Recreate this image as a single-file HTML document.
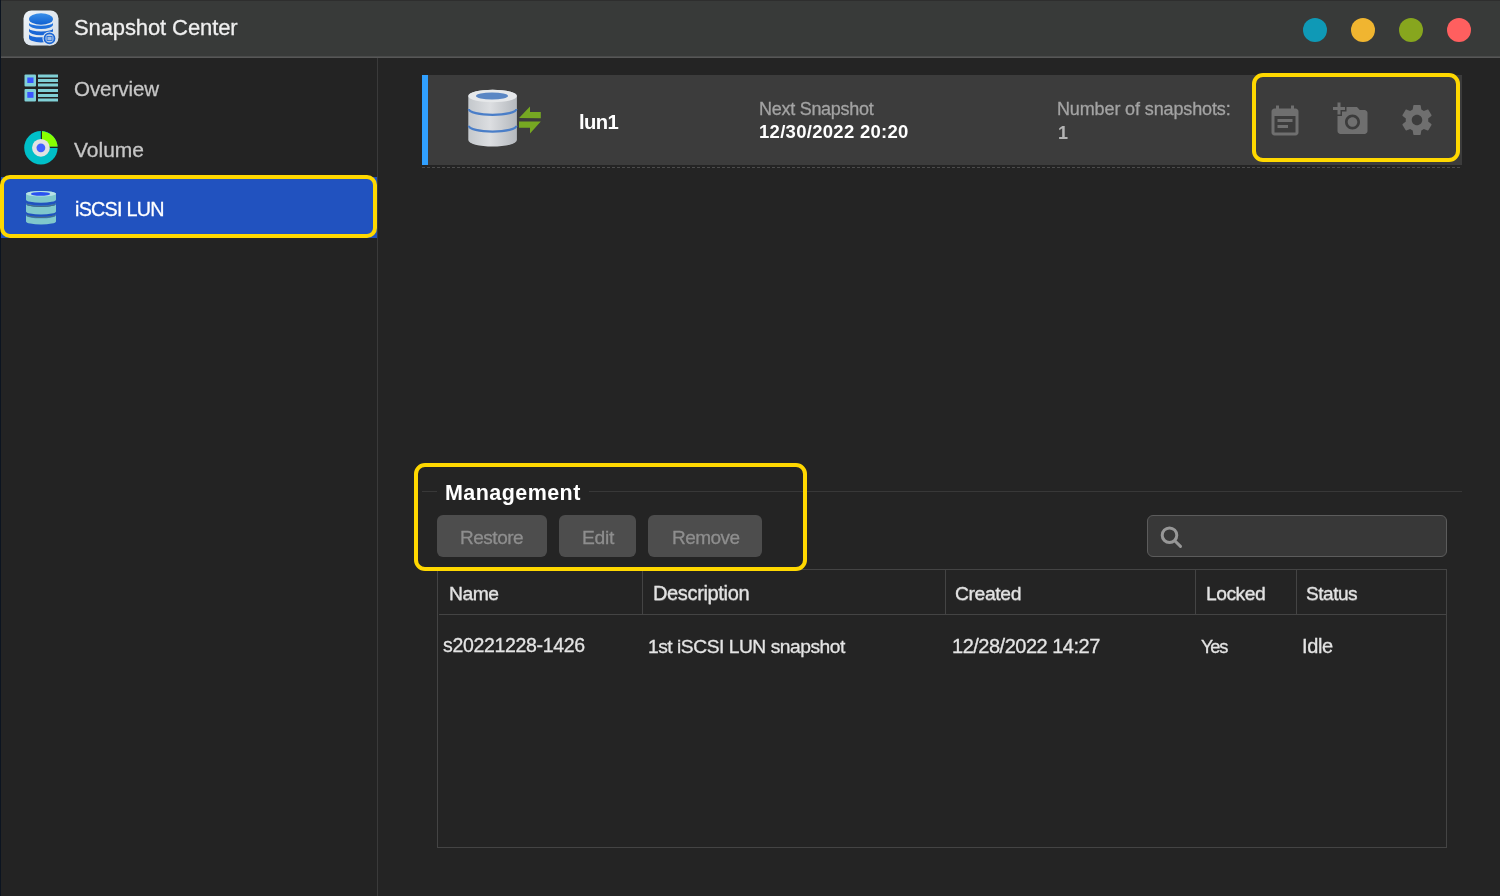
<!DOCTYPE html>
<html><head><meta charset="utf-8"><style>
html,body{margin:0;padding:0;}
body{width:1500px;height:896px;position:relative;overflow:hidden;background:#242424;font-family:"Liberation Sans",sans-serif;}
.a{position:absolute;box-sizing:border-box;}
.t{position:absolute;white-space:nowrap;line-height:1;will-change:transform;-webkit-text-stroke:0.3px currentColor;}
svg{position:absolute;overflow:visible;}
</style></head><body>
<!-- title bar -->
<div class="a" style="left:0;top:0;width:1500px;height:56px;background:#383a39;"></div>
<div class="a" style="left:0;top:0;width:1500px;height:1px;background:#2e2e2e;"></div>
<div class="a" style="left:0;top:56px;width:1500px;height:1px;background:#4a4b4b;"></div><div class="a" style="left:0;top:57px;width:1500px;height:1px;background:#575757;"></div>
<div class="a" style="left:0;top:0;width:1px;height:896px;background:#0c1420;"></div>
<!-- sidebar -->
<div class="a" style="left:1px;top:58px;width:376px;height:838px;background:#232323;"></div>
<div class="a" style="left:377px;top:58px;width:1px;height:838px;background:#3a3a3a;"></div>
<div class="a" style="left:1px;top:177px;width:376px;height:61px;background:#2152bf;"></div>
<div class="a" style="left:0px;top:175px;width:377px;height:63px;border:4px solid #ffd800;border-radius:10px;"></div>
<!-- card -->
<div class="a" style="left:422px;top:75px;width:1040px;height:90px;background:#3c3c3c;"></div>
<div class="a" style="left:422px;top:75px;width:6px;height:90px;background:#30a0ff;"></div>
<div class="a" style="left:422px;top:167px;width:1040px;height:1px;background:repeating-linear-gradient(90deg,#4c4c4c 0 3px,transparent 3px 5px);"></div>
<div class="a" style="left:1252px;top:73px;width:208px;height:89px;border:4px solid #ffd800;border-radius:11px;"></div>
<!-- management -->
<div class="a" style="left:422px;top:491px;width:1040px;height:1px;background:#383838;"></div>
<div class="a" style="left:437px;top:475px;width:152px;height:30px;background:#242424;"></div>
<div class="a" style="left:437px;top:515px;width:110px;height:42px;background:#4d4d4d;border-radius:6px;"></div>
<div class="a" style="left:559px;top:515px;width:77px;height:42px;background:#4d4d4d;border-radius:6px;"></div>
<div class="a" style="left:648px;top:515px;width:114px;height:42px;background:#4d4d4d;border-radius:6px;"></div>
<div class="a" style="left:1147px;top:515px;width:300px;height:42px;background:#383838;border:1px solid #5c5c5c;border-radius:6px;"></div>
<!-- table -->
<div class="a" style="left:437px;top:569px;width:1010px;height:279px;border:1px solid #444;"></div>
<div class="a" style="left:439px;top:614px;width:1007px;height:1px;background:#444;"></div>
<div class="a" style="left:642px;top:570px;width:1px;height:44px;background:#444;"></div>
<div class="a" style="left:945px;top:570px;width:1px;height:44px;background:#444;"></div>
<div class="a" style="left:1195px;top:570px;width:1px;height:44px;background:#444;"></div>
<div class="a" style="left:1296px;top:570px;width:1px;height:44px;background:#444;"></div>
<div class="a" style="left:414px;top:463px;width:393px;height:108px;border:4px solid #ffd800;border-radius:11px;"></div>
<!-- window dots -->
<div class="a" style="left:1302.5px;top:17.5px;width:24.5px;height:24.5px;border-radius:50%;background:#0f99b6;"></div>
<div class="a" style="left:1350.5px;top:17.5px;width:24.5px;height:24.5px;border-radius:50%;background:#f0b530;"></div>
<div class="a" style="left:1398.5px;top:17.5px;width:24.5px;height:24.5px;border-radius:50%;background:#87a61e;"></div>
<div class="a" style="left:1446.5px;top:17.5px;width:24.5px;height:24.5px;border-radius:50%;background:#ff5f5f;"></div>
<!-- app icon -->
<svg style="left:23px;top:10px" width="36" height="36" viewBox="0 0 36 36">
<defs>
<linearGradient id="appbg" x1="0" y1="0" x2="1" y2="1"><stop offset="0" stop-color="#eef3f8"/><stop offset="1" stop-color="#d3dde7"/></linearGradient>
<linearGradient id="appblue" x1="0" y1="0" x2="0" y2="1"><stop offset="0" stop-color="#3a90ea"/><stop offset="1" stop-color="#1060d0"/></linearGradient>
</defs>
<rect x="0.5" y="0.5" width="35" height="35" rx="8" fill="url(#appbg)"/>
<path d="M6,24.3 A12,3 0 0 0 30,24.3 L30,27.9 A12,4.5 0 0 1 6,27.9 Z" fill="#1a66d6"/>
<path d="M6,18.5 A12,3 0 0 0 30,18.5 L30,20.7 A12,4.5 0 0 1 6,20.7 Z" fill="#1a66d6"/>
<path d="M6,12.7 A12,3 0 0 0 30,12.7 L30,14.5 A12,4.5 0 0 1 6,14.5 Z" fill="#1f70dc"/>
<ellipse cx="18" cy="9" rx="12" ry="5.8" fill="url(#appblue)"/>
<circle cx="26.5" cy="28.4" r="7" fill="#dae3ec"/>
<circle cx="26.5" cy="28.4" r="5" fill="#b8cce6" stroke="#1a66d6" stroke-width="1.8"/>
<rect x="24" y="26.4" width="5" height="4" fill="#9ebde6" stroke="#1a66d6" stroke-width="0.8"/>
</svg>
<!-- overview icon -->
<svg style="left:24px;top:74px" width="34" height="28" viewBox="0 0 34 28">
<rect x="0.5" y="0.5" width="11.5" height="12" rx="1" fill="#80d0d6"/>
<rect x="3.3" y="3.5" width="6.2" height="5.5" fill="#3a55ff"/>
<rect x="0.5" y="15" width="11.5" height="12.5" rx="1" fill="#80d0d6"/>
<rect x="3.3" y="18" width="6.2" height="5.8" fill="#3a55ff"/>
<rect x="14" y="0.5" width="20" height="3" fill="#80d0d6"/>
<rect x="14" y="5" width="20" height="3" fill="#80d0d6"/>
<rect x="14" y="9.5" width="20" height="3" fill="#80d0d6"/>
<rect x="14" y="15" width="20" height="3" fill="#80d0d6"/>
<rect x="14" y="20" width="20" height="3" fill="#80d0d6"/>
<rect x="14" y="24.5" width="20" height="3" fill="#80d0d6"/>
</svg>
<!-- volume icon -->
<svg style="left:20px;top:127px" width="42" height="42" viewBox="0 0 42 42">
<circle cx="20.9" cy="20.8" r="16.7" fill="#00bfc8"/>
<path d="M21.9,19.8 L21.9,4.13 A16.7,16.7 0 0 1 37.57,19.8 Z" fill="#88ff00"/>
<path d="M21.4,3 L21.4,20.3 L39,20.3" fill="none" stroke="#222" stroke-width="1.2"/>
<circle cx="20.9" cy="20.8" r="8.9" fill="#e2e2e2"/>
<circle cx="20.9" cy="20.8" r="4.4" fill="#4060ff"/>
</svg>
<!-- iscsi icon (sidebar) -->
<svg style="left:26px;top:191px" width="30" height="34" viewBox="0 0 30 34">
<path d="M0,24 A15,3 0 0 0 30,24 L30,30.5 A15,3 0 0 1 0,30.5 Z" fill="#80c8cc"/>
<path d="M0,22.8 A15,3 0 0 0 30,22.8 L30,24.3 A15,3 0 0 1 0,24.3 Z" fill="#3a85cc"/>
<path d="M0,13 A15,3 0 0 0 30,13 L30,20.5 A15,3 0 0 1 0,20.5 Z" fill="#80c8cc"/>
<path d="M0,11.5 A15,3 0 0 0 30,11.5 L30,13 A15,3 0 0 1 0,13 Z" fill="#3a85cc"/>
<path d="M0.5,12.6 A14.5,2.8 0 0 0 29.5,12.6" fill="none" stroke="#4a6878" stroke-width="1"/>
<path d="M0.5,23.6 A14.5,2.8 0 0 0 29.5,23.6" fill="none" stroke="#4a6878" stroke-width="1"/>
<path d="M0,2.8 A15,2.8 0 0 1 30,2.8 L30,8.7 A15,3 0 0 1 0,8.7 Z" fill="#80c8cc"/>
<ellipse cx="15" cy="2.8" rx="15" ry="2.8" fill="#b8e2e6"/>
<ellipse cx="14.5" cy="2.9" rx="9.6" ry="1.9" fill="#2a52f0"/>
</svg>
<!-- lun1 db icon -->
<svg style="left:468px;top:89px" width="50" height="59" viewBox="0 0 50 59">
<defs>
<linearGradient id="cyl" x1="0" y1="0" x2="1" y2="0"><stop offset="0" stop-color="#c4c8cc"/><stop offset="0.45" stop-color="#dcdee1"/><stop offset="1" stop-color="#b4b8bd"/></linearGradient>
</defs>
<path d="M0.3,7 A24.3,6.3 0 0 1 48.9,7 L48.9,51 A24.3,6.6 0 0 1 0.3,51 Z" fill="url(#cyl)"/>
<ellipse cx="24.6" cy="7" rx="24.3" ry="6.3" fill="#e6e8ea"/>
<ellipse cx="24" cy="7" rx="16" ry="3.4" fill="#5a86c4"/>
<path d="M0.8,20 A23.8,5.8 0 0 0 48.4,20" fill="none" stroke="#4a7ec8" stroke-width="2.2"/>
<path d="M0.8,36.8 A23.8,5.8 0 0 0 48.4,36.8" fill="none" stroke="#4a7ec8" stroke-width="2.2"/>
</svg>
<svg style="left:519px;top:106px" width="22" height="28" viewBox="0 0 22 28">
<path d="M0,12 L11,0.4 L11,6 L21.8,6 L21.8,12.3 Z" fill="#76a822"/>
<path d="M21.8,15.5 L11,27.4 L11,21.8 L0,21.8 L0,15.5 Z" fill="#76a822"/>
</svg>
<!-- calendar -->
<svg style="left:1267px;top:103.5px" width="36" height="36" viewBox="0 0 24 24">
<path fill="#6f6f6f" d="M17 10H7v2h10v-2zm2-7h-1V1h-2v2H8V1H6v2H5c-1.11 0-1.99.9-1.99 2L3 19c0 1.1.89 2 2 2h14c1.1 0 2-.9 2-2V5c0-1.1-.9-2-2-2zm0 16H5V8h14v11zm-5-5H7v2h7v-2z"/>
</svg>
<!-- add photo -->
<svg style="left:1333px;top:100.5px" width="36" height="36" viewBox="0 0 24 24">
<path fill="#6f6f6f" d="M3 4V1h2v3h3v2H5v3H3V6H0V4h3zm3 6V7h3V4h7l1.83 2H21c1.1 0 2 .9 2 2v12c0 1.1-.9 2-2 2H5c-1.1 0-2-.9-2-2V10h3zm7 9c2.76 0 5-2.240 5-5s-2.24-5-5-5-5 2.24-5 5 2.24 5 5 5zm-3.2-5c0 1.77 1.43 3.2 3.2 3.2s3.2-1.43 3.2-3.2-1.43-3.2-3.2-3.2-3.2 1.43-3.2 3.2z"/>
</svg>
<!-- gear -->
<svg style="left:1399px;top:102px" width="36" height="36" viewBox="0 0 24 24">
<path fill="#6f6f6f" d="M19.43 12.98c.04-.32.07-.64.07-.98s-.03-.66-.07-.98l2.11-1.650c.19-.15.24-.42.12-.64l-2-3.46c-.12-.22-.39-.3-.61-.22l-2.49 1c-.52-.4-1.08-.73-1.69-.98l-.38-2.65C14.46 2.18 14.25 2 14 2h-4c-.25 0-.46.18-.49.42l-.38 2.65c-.61.25-1.17.59-1.69.98l-2.49-1c-.23-.09-.49 0-.61.22l-2 3.46c-.13.22-.07.49.12.64l2.11 1.65c-.04.32-.07.65-.07.98s.03.66.07.98l-2.11 1.65c-.19.15-.24.42-.12.64l2 3.46c.12.22.39.3.61.22l2.49-1c.52.4 1.08.73 1.69.98l.38 2.65c.03.24.24.42.49.42h4c.25 0 .46-.18.49-.42l.38-2.65c.61-.25 1.17-.59 1.69-.98l2.49 1c.23.09.49 0 .61-.22l2-3.46c.12-.22.07-.49-.12-.64l-2.11-1.65zM12 15.5c-1.93 0-3.5-1.57-3.5-3.5s1.57-3.5 3.5-3.5 3.5 1.57 3.5 3.5-1.57 3.5-3.5 3.5z"/>
</svg>
<!-- search -->
<svg style="left:1150px;top:518px" width="40" height="35" viewBox="0 0 40 35">
<circle cx="19.5" cy="17.2" r="7.3" fill="none" stroke="#979797" stroke-width="3"/>
<line x1="25" y1="23" x2="30.5" y2="28.4" stroke="#979797" stroke-width="3" stroke-linecap="round"/>
</svg>

<div class="t" style="left:74.40px;top:17.38px;font-size:22px;letter-spacing:-0.108px;color:#efefef;">Snapshot Center</div>
<div class="t" style="left:74.20px;top:79.25px;font-size:20.5px;letter-spacing:-0.041px;color:#c6c6c6;">Overview</div>
<div class="t" style="left:73.80px;top:139.22px;font-size:21px;letter-spacing:-0.007px;color:#c6c6c6;">Volume</div>
<div class="t" style="left:74.60px;top:200.08px;font-size:19.75px;letter-spacing:-0.736px;color:#ffffff;">iSCSI LUN</div>
<div class="t" style="left:578.60px;top:112.06px;font-size:20.25px;letter-spacing:-0.638px;color:#ffffff;font-weight:bold;-webkit-text-stroke:0;">lun1</div>
<div class="t" style="left:758.80px;top:99.56px;font-size:18px;letter-spacing:-0.273px;color:#a3a3a3;">Next Snapshot</div>
<div class="t" style="left:758.80px;top:122.94px;font-size:18.5px;letter-spacing:0.291px;color:#ffffff;font-weight:bold;-webkit-text-stroke:0;">12/30/2022 20:20</div>
<div class="t" style="left:1057.30px;top:99.76px;font-size:18px;letter-spacing:-0.128px;color:#a3a3a3;">Number of snapshots:</div>
<div class="t" style="left:1057.50px;top:124.46px;font-size:18px;letter-spacing:0.000px;color:#b4b4b4;font-weight:bold;-webkit-text-stroke:0;">1</div>
<div class="t" style="left:445.30px;top:482.50px;font-size:21.5px;letter-spacing:0.436px;color:#ffffff;font-weight:bold;-webkit-text-stroke:0;">Management</div>
<div class="t" style="left:460.40px;top:528.22px;font-size:19.0px;letter-spacing:-0.483px;color:#8e8e8e;">Restore</div>
<div class="t" style="left:581.70px;top:528.00px;font-size:19.25px;letter-spacing:-0.302px;color:#8e8e8e;">Edit</div>
<div class="t" style="left:671.60px;top:528.22px;font-size:19.0px;letter-spacing:-0.555px;color:#8e8e8e;">Remove</div>
<div class="t" style="left:448.70px;top:584.00px;font-size:19.25px;letter-spacing:-0.466px;color:#e2e2e2;text-shadow:0.3px 1.4px 0.3px #5e5e5e;">Name</div>
<div class="t" style="left:652.70px;top:583.37px;font-size:20px;letter-spacing:-0.350px;color:#e2e2e2;text-shadow:0.3px 1.4px 0.3px #5e5e5e;">Description</div>
<div class="t" style="left:954.80px;top:584.00px;font-size:19.25px;letter-spacing:-0.355px;color:#e2e2e2;text-shadow:0.3px 1.4px 0.3px #5e5e5e;">Created</div>
<div class="t" style="left:1205.70px;top:584.00px;font-size:19.25px;letter-spacing:-0.496px;color:#e2e2e2;text-shadow:0.3px 1.4px 0.3px #5e5e5e;">Locked</div>
<div class="t" style="left:1305.70px;top:584.22px;font-size:19.0px;letter-spacing:-0.453px;color:#e2e2e2;text-shadow:0.3px 1.4px 0.3px #5e5e5e;">Status</div>
<div class="t" style="left:443.00px;top:636.49px;font-size:19.5px;letter-spacing:-0.334px;color:#e4e4e4;">s20221228-1426</div>
<div class="t" style="left:648.10px;top:636.70px;font-size:19.25px;letter-spacing:-0.486px;color:#e4e4e4;">1st iSCSI LUN snapshot</div>
<div class="t" style="left:951.70px;top:636.07px;font-size:20px;letter-spacing:-0.493px;color:#e4e4e4;">12/28/2022 14:27</div>
<div class="t" style="left:1200.70px;top:637.55px;font-size:18.25px;letter-spacing:-1.224px;color:#e4e4e4;">Yes</div>
<div class="t" style="left:1301.70px;top:636.07px;font-size:20px;letter-spacing:-0.400px;color:#e4e4e4;">Idle</div>
</body></html>
